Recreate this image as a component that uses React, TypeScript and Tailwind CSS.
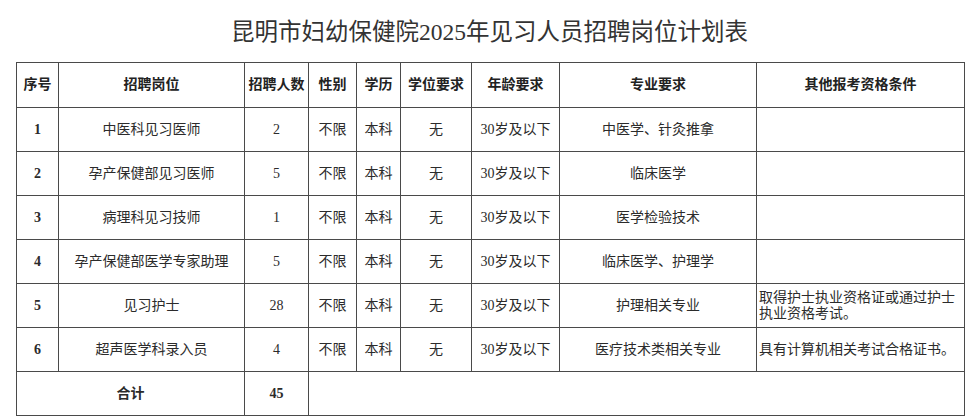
import React from 'react';

interface Post {
  no: number;
  title: string;
  count: number;
  major: string;
  extra: string;
}

const posts: Post[] = [
  { no: 1, title: '中医科见习医师', count: 2, major: '中医学、针灸推拿', extra: '' },
  { no: 2, title: '孕产保健部见习医师', count: 5, major: '临床医学', extra: '' },
  { no: 3, title: '病理科见习技师', count: 1, major: '医学检验技术', extra: '' },
  { no: 4, title: '孕产保健部医学专家助理', count: 5, major: '临床医学、护理学', extra: '' },
  { no: 5, title: '见习护士', count: 28, major: '护理相关专业', extra: '取得护士执业资格证或通过护士执业资格考试。' },
  { no: 6, title: '超声医学科录入员', count: 4, major: '医疗技术类相关专业', extra: '具有计算机相关考试合格证书。' },
];

const headers = ['序号', '招聘岗位', '招聘人数', '性别', '学历', '学位要求', '年龄要求', '专业要求', '其他报考资格条件'];
const widths = ['w-[42px]', 'w-[186px]', 'w-[64px]', 'w-[48px]', 'w-[44px]', 'w-[71px]', 'w-[88px]', 'w-[197px]', 'w-[208px]'];

const cell = 'border border-[#4a4a4a] text-center align-middle p-0';

export default function App() {
  return (
    <div className="w-[979px] h-[420px] bg-white text-[#2b2b2b] font-['Liberation_Serif','Noto_Sans_CJK_SC',serif] overflow-hidden">
      <div className="h-[62px] flex items-center justify-center pt-[4px]">
        <h1 className="text-[23.5px] leading-none text-[#333] font-normal">
          昆明市妇幼保健院2025年见习人员招聘岗位计划表
        </h1>
      </div>
      <div className="pl-[16px]">
        <table className="table-fixed border-collapse w-[948px] text-[14px] leading-[16px]">
          <colgroup>
            {widths.map((w, i) => (
              <col key={i} className={w} />
            ))}
          </colgroup>
          <thead>
            <tr className="h-[45px]">
              {headers.map(h => (
                <th key={h} className={`${cell} font-bold text-[#222] whitespace-nowrap`}>
                  {h}
                </th>
              ))}
            </tr>
          </thead>
          <tbody>
            {posts.map(p => (
              <tr key={p.no} className="h-[44px]">
                <td className={`${cell} font-bold`}>{p.no}</td>
                <td className={cell}>{p.title}</td>
                <td className={cell}>{p.count}</td>
                <td className={cell}>不限</td>
                <td className={cell}>本科</td>
                <td className={cell}>无</td>
                <td className={cell}>30岁及以下</td>
                <td className={cell}>{p.major}</td>
                <td className={`${cell} !text-left !pl-[2px] !pr-[4px]`}>{p.extra}</td>
              </tr>
            ))}
            <tr className="h-[44px]">
              <td colSpan={2} className={`${cell} font-bold`}>合计</td>
              <td className={`${cell} font-bold`}>45</td>
              <td colSpan={6} className={cell}></td>
            </tr>
          </tbody>
        </table>
      </div>
    </div>
  );
}
